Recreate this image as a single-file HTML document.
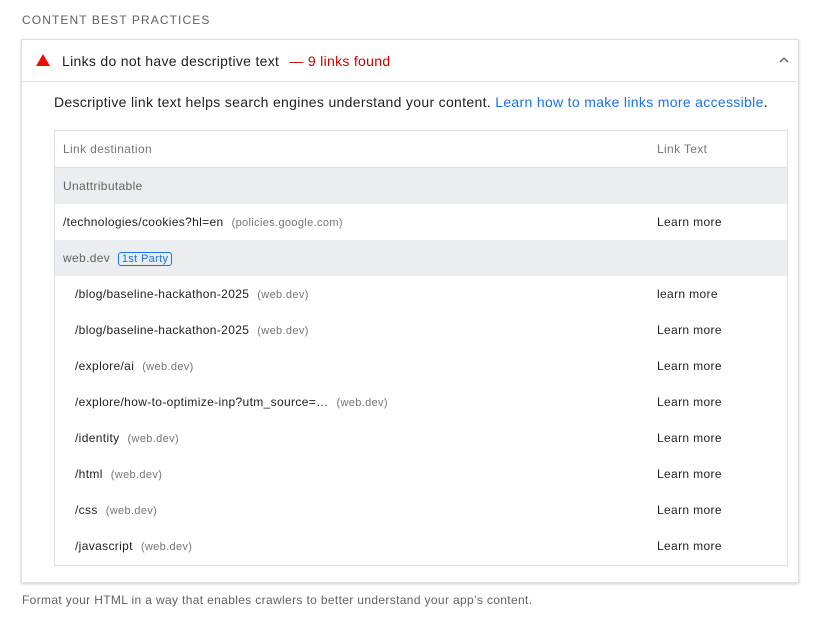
<!DOCTYPE html>
<html><head><style>
body{margin:0;width:823px;height:620px;background:#fff;font-family:"Liberation Sans",sans-serif;position:relative;overflow:hidden;color:#212121}
.a{position:absolute;white-space:nowrap}
.card{position:absolute;left:21px;top:39px;width:776px;height:542px;border:1px solid #e0e0e0;box-shadow:0 1px 3px rgba(0,0,0,.2)}
.tbl{position:absolute;left:54px;top:130px;width:732px;height:434px;border:1px solid #e0e0e0;letter-spacing:0.35px}
.row{position:absolute;left:0;width:732px;height:36px;font-size:12px;line-height:36px}
.g{background:#ebeef1;color:#616161}
.s{color:#757575;font-size:11px;margin-left:8px}
.lt{position:absolute;left:602px;top:0}
</style></head><body>
<div class="a" style="left:22px;top:13px;font-size:12px;letter-spacing:1.1px;color:#616161">CONTENT BEST PRACTICES</div>
<div class="card">
 <div style="position:absolute;left:0;top:41px;width:776px;border-top:1px solid #e0e0e0"></div>
 <svg class="a" style="left:14px;top:14px" width="14" height="12"><polygon points="7,0 14,12 0,12" fill="#eb0f00"/></svg>
 <div class="a" style="left:40px;top:12px;font-size:14px;line-height:18px;letter-spacing:0.3px">Links do not have descriptive text <span style="color:#c00;margin-left:6px">— 9 links found</span></div>
 <svg class="a" style="left:756px;top:16px" width="12" height="8"><polyline points="2,6 6,2 10,6" fill="none" stroke="#616161" stroke-width="1.3"/></svg>
 <div class="a" style="left:32px;top:53px;font-size:14px;line-height:18px;letter-spacing:0.32px">Descriptive link text helps search engines understand your content. <span style="color:#1a73e8">Learn how to make links more accessible</span>.</div>
</div>
<div class="tbl">
 <div class="row" style="top:0;color:#757575"><span style="margin-left:8px">Link destination</span><span class="lt">Link Text</span></div>
 <div style="position:absolute;top:36px;left:0;width:732px;border-top:1px solid #e0e0e0"></div>
 <div class="row g" style="top:37px"><span style="margin-left:8px">Unattributable</span></div>
 <div class="row" style="top:73px"><span style="margin-left:8px">/technologies/cookies?hl=en</span><span class="s">(policies.google.com)</span><span class="lt">Learn more</span></div>
 <div class="row g" style="top:109px"><span style="margin-left:8px">web.dev</span> <span style="color:#1a73e8;border:1px solid #1a73e8;border-radius:3px;padding:0 3px;font-size:11px;line-height:14px;margin-left:4px">1st Party</span></div>
 <div class="row" style="top:145px"><span style="margin-left:20px">/blog/baseline-hackathon-2025</span><span class="s">(web.dev)</span><span class="lt">learn more</span></div>
 <div class="row" style="top:181px"><span style="margin-left:20px">/blog/baseline-hackathon-2025</span><span class="s">(web.dev)</span><span class="lt">Learn more</span></div>
 <div class="row" style="top:217px"><span style="margin-left:20px">/explore/ai</span><span class="s">(web.dev)</span><span class="lt">Learn more</span></div>
 <div class="row" style="top:253px"><span style="margin-left:20px">/explore/how-to-optimize-inp?utm_source=…</span><span class="s">(web.dev)</span><span class="lt">Learn more</span></div>
 <div class="row" style="top:289px"><span style="margin-left:20px">/identity</span><span class="s">(web.dev)</span><span class="lt">Learn more</span></div>
 <div class="row" style="top:325px"><span style="margin-left:20px">/html</span><span class="s">(web.dev)</span><span class="lt">Learn more</span></div>
 <div class="row" style="top:361px"><span style="margin-left:20px">/css</span><span class="s">(web.dev)</span><span class="lt">Learn more</span></div>
 <div class="row" style="top:397px"><span style="margin-left:20px">/javascript</span><span class="s">(web.dev)</span><span class="lt">Learn more</span></div>
</div>
<div class="a" style="left:22px;top:593px;font-size:12px;color:#616161;letter-spacing:0.35px">Format your HTML in a way that enables crawlers to better understand your app’s content.</div>
</body></html>
